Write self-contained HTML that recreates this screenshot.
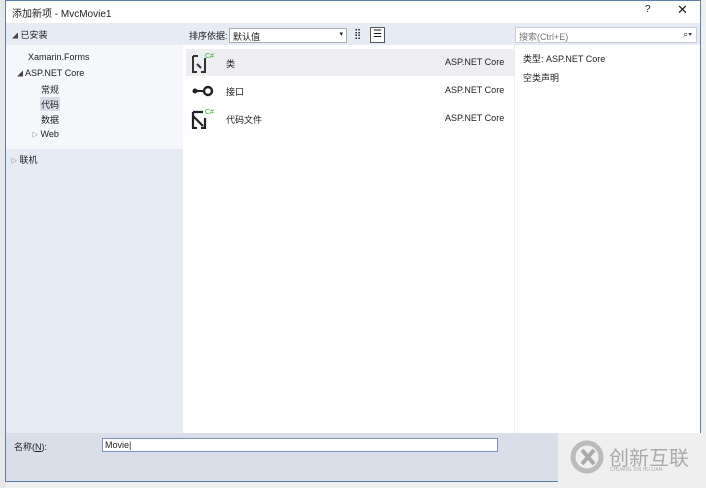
<!DOCTYPE html>
<html><head><meta charset="utf-8"><style>
*{margin:0;padding:0;box-sizing:border-box}
body{width:706px;height:488px;background:#f0f0f0;position:relative;overflow:hidden;font-family:"Liberation Sans","Noto Sans CJK SC",sans-serif;font-size:9px;color:#1e1e1e}
.a{position:absolute}
.t{font-size:6px;color:#444}
</style></head><body>
<div class="a" style="left:0;top:0;width:6px;height:488px;background:#e8e8e8"></div>
<div class="a" style="left:5px;top:0;width:696px;height:482px;border:1px solid #5b7fa8;background:#fff"></div>
<div class="a" style="left:12px;top:5px;font-size:10px">添加新项 - MvcMovie1</div>
<div class="a" style="left:645px;top:4px;font-size:10px">?</div>
<div class="a" style="left:677px;top:2px;font-size:13px">✕</div>
<div class="a" style="left:6px;top:23px;width:694px;height:22px;background:#e6ebf4"></div>
<div class="a" style="left:12px;top:28px"><span class="t">◢</span> 已安装</div>
<div class="a" style="left:6px;top:45px;width:177px;height:104px;background:#f5f7fb"></div>
<div class="a" style="left:6px;top:149px;width:177px;height:284px;background:#e6ebf4"></div>
<div class="a" style="left:28px;top:52px">Xamarin.Forms</div>
<div class="a" style="left:17px;top:68px"><span class="t">◢</span> ASP.NET Core</div>
<div class="a" style="left:41px;top:83px">常规</div>
<div class="a" style="left:40px;top:97px;width:20px;height:14px;background:#d6dbe6"></div>
<div class="a" style="left:41px;top:98px">代码</div>
<div class="a" style="left:41px;top:113px">数据</div>
<div class="a" style="left:32px;top:129px"><span class="t">▷</span> Web</div>
<div class="a" style="left:11px;top:153px"><span class="t">▷</span> 联机</div>
<div class="a" style="left:189px;top:29px">排序依据:</div>
<div class="a" style="left:229px;top:28px;width:118px;height:15px;background:#fff;border:1px solid #abadb3;padding:1px 3px">默认值<span style="position:absolute;right:3px;top:1px;font-size:7px">▾</span></div>
<div class="a" style="left:354px;top:29px;font-size:10px;letter-spacing:-1px">⣿</div>
<div class="a" style="left:370px;top:27px;width:15px;height:16px;border:1px solid #555;background:#fff;font-size:10px;text-align:center;line-height:14px">☰</div>
<div class="a" style="left:515px;top:27px;width:182px;height:16px;background:#fff;border:1px solid #ccd;padding:2px 3px;color:#777">搜索(Ctrl+E)<span style="position:absolute;right:4px;top:1px;color:#333">⌕▾</span></div>
<div class="a" style="left:186px;top:45px;width:328px;height:388px;background:#fff"></div>
<div class="a" style="left:186px;top:49px;width:328px;height:27px;background:#eeeef2"></div>
<svg class="a" style="left:191px;top:51px" width="26" height="24"><path d="M2 5v16h4M2 5h5M14 7v14h-4" stroke="#333" stroke-width="2" fill="none"/><path d="M6 13l4 4" stroke="#333" stroke-width="2"/><text x="14" y="7" font-size="7" fill="#3a3" font-family="Liberation Sans">C#</text></svg>
<div class="a" style="left:226px;top:57px">类</div>
<svg class="a" style="left:192px;top:84px" width="24" height="14"><circle cx="3" cy="7" r="2.5" fill="#222"/><path d="M5 7h7" stroke="#222" stroke-width="2"/><circle cx="16" cy="7" r="4" stroke="#222" stroke-width="2.4" fill="none"/></svg>
<div class="a" style="left:226px;top:85px">接口</div>
<svg class="a" style="left:191px;top:107px" width="26" height="22"><path d="M2 5h10M2 5v16h4M2 9l10 10M14 11v10h-4" stroke="#222" stroke-width="2.2" fill="none"/><text x="14" y="7" font-size="7" fill="#3a3" font-family="Liberation Sans">C#</text></svg>
<div class="a" style="left:226px;top:113px">代码文件</div>
<div class="a" style="left:445px;top:57px">ASP.NET Core</div>
<div class="a" style="left:445px;top:85px">ASP.NET Core</div>
<div class="a" style="left:445px;top:113px">ASP.NET Core</div>
<div class="a" style="left:514px;top:45px;width:1px;height:388px;background:#eee"></div>
<div class="a" style="left:523px;top:52px">类型:  ASP.NET Core</div>
<div class="a" style="left:523px;top:71px">空类声明</div>
<div class="a" style="left:6px;top:433px;width:694px;height:48px;background:#d9dee9"></div>
<div class="a" style="left:14px;top:440px">名称(<u>N</u>):</div>
<div class="a" style="left:102px;top:438px;width:396px;height:14px;background:#fff;border:1px solid #7a8fc8;padding:1px 2px">Movie|</div>
<div class="a" style="left:558px;top:433px;width:148px;height:55px;background:#efefef"></div>
<svg class="a" style="left:570px;top:440px" width="34" height="34"><circle cx="17" cy="17" r="14" fill="none" stroke="#bbb" stroke-width="5"/><path d="M12 10l12 14M24 10l-12 14" stroke="#aaa" stroke-width="4"/></svg>
<div class="a" style="left:609px;top:442px;font-size:20px;color:#aaa">创新互联</div>
<div class="a" style="left:610px;top:467px;font-size:5px;color:#aaa">CHUANG XIN HU LIAN</div>
</body></html>
